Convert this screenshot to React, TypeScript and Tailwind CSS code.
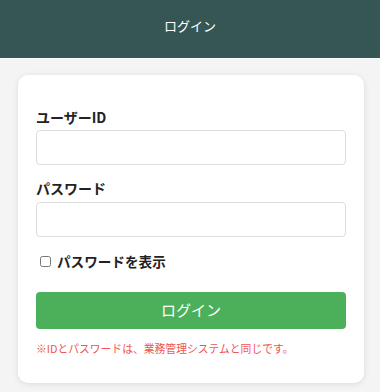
import { useState } from "react";

export default function App() {
  const [userId, setUserId] = useState("");
  const [password, setPassword] = useState("");
  const [showPassword, setShowPassword] = useState(false);

  return (
    <div className="min-h-screen bg-[#f4f4f4] font-['Noto_Sans_CJK_JP','Noto_Sans',sans-serif] text-[#222]">
      <header className="h-[59px] bg-[#355654] flex justify-center pt-[16px] border-b border-[#fafafa]">
        <h1 className="text-white text-[13px] leading-[20px]">ログイン</h1>
      </header>

      <main className="ml-[18px] mr-[16px] mt-[16px] bg-white rounded-[10px] shadow-[0_1px_6px_rgba(0,0,0,0.1)] px-[18px] pt-[32px] pb-[27px]">
        <label className="block text-[14px] leading-[20px] font-bold mb-[3px]">
          ユーザーID
        </label>
        <input
          type="text"
          value={userId}
          onChange={(e) => setUserId(e.target.value)}
          className="block w-full h-[35px] border border-[#dddddd] rounded-[4px] px-2 text-[14px] outline-none"
        />

        <label className="block text-[14px] leading-[20px] font-bold mt-[13px] mb-[4px]">
          パスワード
        </label>
        <input
          type={showPassword ? "text" : "password"}
          value={password}
          onChange={(e) => setPassword(e.target.value)}
          className="block w-full h-[35px] border border-[#dddddd] rounded-[4px] px-2 text-[14px] outline-none"
        />

        <label className="flex items-center mt-[14px] h-[20px] text-[13.6px] font-bold">
          <input
            type="checkbox"
            checked={showPassword}
            onChange={(e) => setShowPassword(e.target.checked)}
            className="w-[11px] h-[11px] ml-[4px] mr-[6px]"
          />
          パスワードを表示
        </label>

        <button className="mt-[21px] w-full h-[37px] rounded-[4px] bg-[#4caf5a] text-white text-[15px]">
          ログイン
        </button>

        <p className="mt-[11px] text-[10.8px] leading-[16px] text-[#f0554f]">
          ※IDとパスワードは、業務管理システムと同じです。
        </p>
      </main>
    </div>
  );
}
